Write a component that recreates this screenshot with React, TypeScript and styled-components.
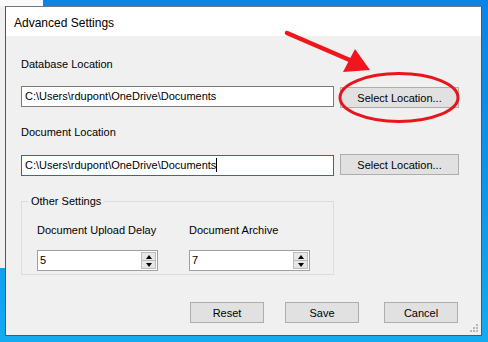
import React from 'react';
import styled, { createGlobalStyle } from 'styled-components';

const Global = createGlobalStyle`
  html, body { margin: 0; padding: 0; }
  body {
    width: 488px;
    height: 342px;
    overflow: hidden;
    font-family: "Liberation Sans", Arial, sans-serif;
    font-size: 11px;
    color: #000;
  }
`;

const Desktop = styled.div`
  position: relative;
  width: 488px;
  height: 342px;
  overflow: hidden;
  background: linear-gradient(180deg, #0b84e8 0%, #0e95ec 55%, #14abf0 100%);
`;

const BackWindow = styled.div`
  position: absolute;
  left: 0;
  top: 0;
  width: 43px;
  height: 268px;
  box-sizing: border-box;
  background: #f0f0f0;
  border-top: 6px solid #fafafa;
`;

const Window = styled.div`
  position: absolute;
  left: 5px;
  top: 6px;
  width: 477px;
  height: 330px;
  box-sizing: border-box;
  border: 1px solid #4b5863;
  border-top-color: #6d7880;
  background: #f0f0f0;
  display: flex;
  flex-direction: column;
`;

const TitleBar = styled.div`
  height: 29px;
  flex: none;
  background: #fff;
  display: flex;
  align-items: center;
  padding: 2px 0 0 8px;
  box-sizing: border-box;
  font-size: 12px;
`;

const Client = styled.div`
  position: relative;
  flex: 1;
  display: flex;
  flex-direction: column;
  align-items: flex-start;
  padding: 22px 23px 0 15px;
`;

const Label = styled.div<{ $mt?: number }>`
  line-height: 13px;
  margin-top: ${p => p.$mt ?? 0}px;
  white-space: nowrap;
`;

const Row = styled.div<{ $mt: number }>`
  display: flex;
  align-items: flex-start;
  gap: 6px;
  margin-top: ${p => p.$mt}px;
`;

const TextBox = styled.div<{ $focused?: boolean }>`
  width: 313px;
  height: 21px;
  box-sizing: border-box;
  border: 1px solid ${p => (p.$focused ? '#0078d7' : '#7a7a7a')};
  background: #fff;
  padding: 0 3px;
  line-height: 19px;
  white-space: nowrap;
  overflow: hidden;
`;

const Caret = styled.span`
  display: inline-block;
  width: 1px;
  height: 14px;
  background: #000;
  vertical-align: -3px;
`;

const Button = styled.div<{ $w: number; $offset?: number; $ml?: number }>`
  width: ${p => p.$w}px;
  height: 21px;
  box-sizing: border-box;
  margin-top: ${p => p.$offset ?? 0}px;
  margin-left: ${p => p.$ml ?? 0}px;
  background: #e1e1e1;
  border: 1px solid #adadad;
  display: flex;
  align-items: center;
  justify-content: center;
  white-space: nowrap;
`;

const Group = styled.fieldset`
  width: 313px;
  box-sizing: border-box;
  margin: 19px 0 0 0;
  padding: 16px 0 3px 15px;
  border: 1px solid #dcdcdc;
  display: flex;
  gap: 31px;
`;

const Legend = styled.legend`
  margin-left: -9px;
  padding: 0 3px;
  line-height: 13px;
`;

const Field = styled.div`
  display: flex;
  flex-direction: column;
  gap: 13px;
`;

const Spinner = styled.div`
  width: 121px;
  height: 21px;
  box-sizing: border-box;
  border: 1px solid #a0a0a0;
  background: #fff;
  display: flex;
`;

const SpinValue = styled.div`
  flex: 1;
  padding-left: 2px;
  line-height: 19px;
`;

const SpinButtons = styled.div`
  width: 15px;
  margin: 1px 1px 1px 0;
  display: flex;
  flex-direction: column;
`;

const SpinButton = styled.div`
  flex: 1;
  background: #e6e6e6;
  border: 1px solid #bcbcbc;
  display: flex;
  align-items: center;
  justify-content: center;
  & + & { border-top: none; }
`;

const Arrow = styled.span<{ $down?: boolean }>`
  width: 0;
  height: 0;
  border-left: 3px solid transparent;
  border-right: 3px solid transparent;
  ${p => (p.$down ? 'border-top: 4px solid #000;' : 'border-bottom: 4px solid #000;')}
`;

const Footer = styled.div`
  align-self: flex-end;
  display: flex;
  margin-top: 27px;
`;

const Grip = styled.svg`
  position: absolute;
  right: 2px;
  bottom: 2px;
`;

const Annotation = styled.svg`
  position: absolute;
  left: 0;
  top: 0;
  pointer-events: none;
`;

const NumberBox = ({ value }: { value: string }) => (
  <Spinner>
    <SpinValue>{value}</SpinValue>
    <SpinButtons>
      <SpinButton><Arrow /></SpinButton>
      <SpinButton><Arrow $down /></SpinButton>
    </SpinButtons>
  </Spinner>
);

export default function App() {
  const path = 'C:\\Users\\rdupont\\OneDrive\\Documents';
  return (
    <Desktop>
      <Global />
      <BackWindow />
      <Window>
        <TitleBar>Advanced Settings</TitleBar>
        <Client>
          <Label>Database Location</Label>
          <Row $mt={15}>
            <TextBox>{path}</TextBox>
            <Button $w={119} $offset={1}>Select Location...</Button>
          </Row>

          <Label $mt={18}>Document Location</Label>
          <Row $mt={16}>
            <TextBox $focused>{path}<Caret /></TextBox>
            <Button $w={119} $offset={-1}>Select Location...</Button>
          </Row>

          <Group>
            <Legend>Other Settings</Legend>
            <Field>
              <Label>Document Upload Delay</Label>
              <NumberBox value="5" />
            </Field>
            <Field>
              <Label>Document Archive</Label>
              <NumberBox value="7" />
            </Field>
          </Group>

          <Footer>
            <Button $w={74}>Reset</Button>
            <Button $w={74} $ml={21}>Save</Button>
            <Button $w={74} $ml={25}>Cancel</Button>
          </Footer>

          <Grip width="10" height="10" viewBox="0 0 10 10">
            {[[7, 1], [4, 4], [7, 4], [1, 7], [4, 7], [7, 7]].map(([x, y]) => (
              <rect key={`${x}-${y}`} x={x} y={y} width="2" height="2" fill="#b8b8b8" />
            ))}
          </Grip>
        </Client>
      </Window>

      <Annotation width="488" height="342" viewBox="0 0 488 342">
        <line x1="287" y1="33" x2="352" y2="61" stroke="#f0161c" strokeWidth="4.5" strokeLinecap="round" />
        <polygon points="370,70 343,72 355,49" fill="#f0161c" />
        <ellipse cx="399" cy="97.5" rx="59" ry="24" fill="none" stroke="#e8151b" strokeWidth="3" />
      </Annotation>
    </Desktop>
  );
}
